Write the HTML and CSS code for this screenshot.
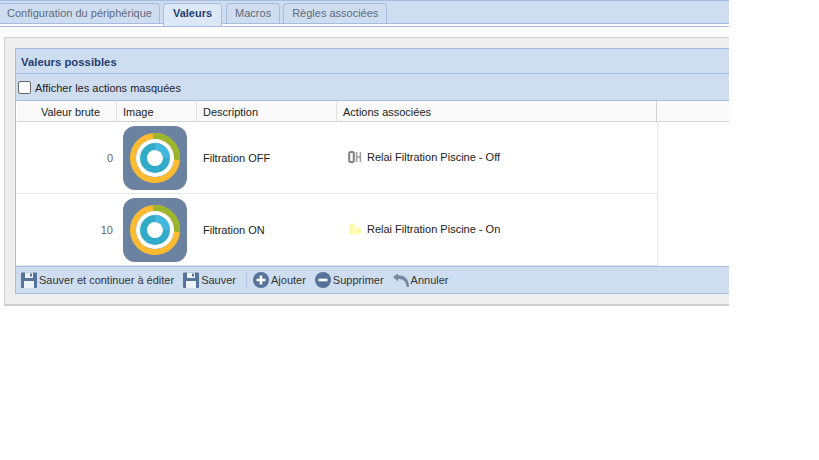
FILE: index.html
```html
<!DOCTYPE html>
<html lang="fr">
<head>
  <meta charset="UTF-8">
  <meta name="viewport" content="width=device-width, initial-scale=1.0">
  <title>Valeurs</title>
  <link rel="stylesheet" href="styles.css">
</head>
<body>
  <div class="page">
    <ul class="tabs">
      <li class="tab">Configuration du périphérique</li>
      <li class="tab active">Valeurs</li>
      <li class="tab">Macros</li>
      <li class="tab">Règles associées</li>
    </ul>
    <div class="tabs-rule"></div>

    <div class="panel">
      <div class="box">
        <div class="box-title">Valeurs possibles</div>
        <label class="box-filter"><span class="checkbox"></span>Afficher les actions masquées</label>

        <div class="row head">
          <div class="cell c-val">Valeur brute</div>
          <div class="cell c-img">Image</div>
          <div class="cell c-desc">Description</div>
          <div class="cell c-act">Actions associées</div>
        </div>

        <div class="row item">
          <div class="cell c-val">0</div>
          <div class="cell c-img">
            <svg class="pic" viewBox="0 0 64 64">
              <rect width="64" height="64" rx="12" fill="#6c82a1"/>
              <circle cx="32" cy="32" r="22" fill="none" stroke="#fdbb30" stroke-width="6"/>
              <path d="M30 10A22 22 0 0 1 54 34" fill="none" stroke="#9cb52c" stroke-width="6"/>
              <circle cx="32" cy="32" r="19" fill="#fff"/>
              <circle cx="32" cy="32" r="11.5" fill="none" stroke="#32abc8" stroke-width="7"/>
              <path d="M32 20.5A11.5 11.5 0 0 1 43.5 32" fill="none" stroke="#45b8de" stroke-width="7"/>
            </svg>
          </div>
          <div class="cell c-desc">Filtration OFF</div>
          <div class="cell c-act">
            <svg class="state" viewBox="0 0 14 14">
              <rect x="1.2" y="2" width="4.6" height="10" rx="1.5" fill="none" stroke="#808080" stroke-width="2"/>
              <path d="M8.6 2v10M12.4 2v10M8 7h5" fill="none" stroke="#a0a0a0" stroke-width="1.6"/>
            </svg>
            Relai Filtration Piscine - Off
          </div>
        </div>

        <div class="row item">
          <div class="cell c-val">10</div>
          <div class="cell c-img">
            <svg class="pic" viewBox="0 0 64 64">
              <rect width="64" height="64" rx="12" fill="#6c82a1"/>
              <circle cx="32" cy="32" r="22" fill="none" stroke="#fdbb30" stroke-width="6"/>
              <path d="M30 10A22 22 0 0 1 54 34" fill="none" stroke="#9cb52c" stroke-width="6"/>
              <circle cx="32" cy="32" r="19" fill="#fff"/>
              <circle cx="32" cy="32" r="11.5" fill="none" stroke="#32abc8" stroke-width="7"/>
              <path d="M32 20.5A11.5 11.5 0 0 1 43.5 32" fill="none" stroke="#45b8de" stroke-width="7"/>
            </svg>
          </div>
          <div class="cell c-desc">Filtration ON</div>
          <div class="cell c-act">
            <svg class="state" viewBox="0 0 14 14">
              <rect x="1" y="1.5" width="6.5" height="11" rx="2" fill="#fdfbb0"/>
              <rect x="8" y="5.5" width="5" height="7" rx="1.5" fill="#fdfbb0"/>
            </svg>
            Relai Filtration Piscine - On
          </div>
        </div>

        <div class="toolbar">
          <a class="tool">
            <svg class="tool-icon" viewBox="0 0 16 16">
              <path d="M0 1.5A1 1 0 0 1 1 .5H15A1 1 0 0 1 16 1.5V15A1 1 0 0 1 15 16H1A1 1 0 0 1 0 15Z" fill="#56749b"/>
              <rect x="4" y=".5" width="8" height="5.5" fill="#eef3fa"/>
              <rect x="9" y="1.5" width="2" height="3" fill="#56749b"/>
              <rect x="3" y="9" width="10" height="7" fill="#eef3fa"/>
            </svg>
            Sauver et continuer à éditer
          </a>
          <a class="tool">
            <svg class="tool-icon" viewBox="0 0 16 16">
              <path d="M0 1.5A1 1 0 0 1 1 .5H15A1 1 0 0 1 16 1.5V15A1 1 0 0 1 15 16H1A1 1 0 0 1 0 15Z" fill="#56749b"/>
              <rect x="4" y=".5" width="8" height="5.5" fill="#eef3fa"/>
              <rect x="9" y="1.5" width="2" height="3" fill="#56749b"/>
              <rect x="3" y="9" width="10" height="7" fill="#eef3fa"/>
            </svg>
            Sauver
          </a>
          <span class="tool-sep"></span>
          <a class="tool">
            <svg class="tool-icon" viewBox="0 0 16 16">
              <circle cx="8" cy="8" r="8" fill="#56749b"/>
              <path d="M3.5 8h9M8 3.5v9" stroke="#fff" stroke-width="2.6"/>
            </svg>
            Ajouter
          </a>
          <a class="tool">
            <svg class="tool-icon" viewBox="0 0 16 16">
              <circle cx="8" cy="8" r="8" fill="#56749b"/>
              <path d="M3.5 8h9" stroke="#fff" stroke-width="2.6"/>
            </svg>
            Supprimer
          </a>
          <a class="tool">
            <svg class="tool-icon" viewBox="0 0 16 16">
              <path d="M0 5L5 1.5V3.6C11 2.6 16 6.5 16 15H13.5C13.5 9.5 10 6.6 5 7V9.5Z" fill="#75889f"/>
            </svg>
            Annuler
          </a>
        </div>
      </div>
    </div>
  </div>
</body>
</html>
```

FILE: styles.css
```css
html, body {
  margin: 0;
  padding: 0;
  background-color: #fff;
}

body {
  font-family: "Liberation Sans", Arial, sans-serif;
  font-size: 11px;
  color: #222;
}

.page {
  width: 729px;
  overflow: hidden;
}

/* Onglets */
.tabs {
  display: flex;
  align-items: flex-start;
  gap: 3px;
  height: 20px;
  margin: 0;
  padding: 2px 0 0 0;
  list-style: none;
  background-color: #cfddf0;
  border-top: 1px solid #a7bcdf;
  border-bottom: 1px solid #a7bcdf;
}

.tab {
  height: 20px;
  padding: 0 8px;
  line-height: 19px;
  font-size: 11px;
  color: #5f6b7a;
  border: 1px solid #a7bcdf;
  border-bottom: none;
  border-radius: 4px 4px 0 0;
  box-sizing: border-box;
}

.tab:first-child {
  margin-left: -2px;
  padding-right: 7px;
}

.tab.active {
  position: relative;
  height: 23px;
  margin-right: 1px;
  padding: 0 9px;
  font-weight: bold;
  color: #1f3f73;
  background-color: #dde8f7;
}

.tabs-rule {
  height: 2px;
  background-color: #fff;
  border-bottom: 1px solid #a7bcdf;
}

/* Panneau */
.panel {
  width: 900px;
  margin: 10px 0 0 4px;
  padding: 10px;
  background-color: #eeeeee;
  border: 1px solid #d2d2d2;
  border-bottom: 2px solid #cfcfcf;
  box-sizing: border-box;
}

.box {
  border: 1px solid #a7bcdf;
  background-color: #fff;
}

.box-title {
  height: 24px;
  padding-left: 5px;
  line-height: 26px;
  font-size: 11.33px;
  font-weight: bold;
  color: #1f3f73;
  background-color: #cfddf0;
  border-bottom: 1px solid #a7bcdf;
}

.box-filter {
  display: flex;
  align-items: center;
  gap: 4px;
  height: 25px;
  padding: 1px 0 0 2px;
  background-color: #cfddf0;
  border-bottom: 1px solid #a7bcdf;
}

.checkbox {
  width: 11px;
  height: 11px;
  background-color: #fff;
  border: 1px solid #666;
  border-radius: 2px;
}

.row {
  display: flex;
  margin-left: 1px;
}

.head {
  height: 20px;
  line-height: 22px;
  background-color: #fafafa;
  border-bottom: 1px solid #d2d2d2;
}

.item {
  height: 71px;
  width: 640px;
  border-bottom: 1px solid #e6e6e6;
  border-right: 1px solid #e6e6e6;
}

.item:last-of-type {
  height: 72px;
  border-bottom: none;
}

.cell {
  padding: 0 6px;
  box-sizing: border-box;
  border-right: 1px solid #e2e2e2;
}

.item .cell {
  display: flex;
  align-items: center;
  border-right: none;
}

.c-val {
  width: 100px;
  padding-right: 16px;
  text-align: right;
}

.item .c-val {
  justify-content: flex-end;
  color: #666;
  padding-right: 4px;
}

.c-img {
  width: 80px;
}

.c-desc {
  width: 140px;
}

.c-act {
  width: 320px;
  border-right: 1px solid #d2d2d2;
}

.item .c-act {
  padding-bottom: 2px;
}

.pic {
  display: block;
  width: 64px;
  height: 64px;
}

.state {
  width: 14px;
  height: 14px;
  margin: 0 5px;
}

/* Barre d'actions */
.toolbar {
  display: flex;
  align-items: center;
  gap: 9px;
  height: 26px;
  padding-left: 5px;
  color: #333;
  background-color: #cfddf0;
  border-top: 1px solid #a7bcdf;
}

.tool {
  display: flex;
  align-items: center;
  gap: 2px;
}

.tool-icon {
  width: 16px;
  height: 16px;
}

.tool-sep {
  width: 1px;
  height: 16px;
  margin: 0 -3px 0 1px;
  background-color: #b4c6e0;
}
```
